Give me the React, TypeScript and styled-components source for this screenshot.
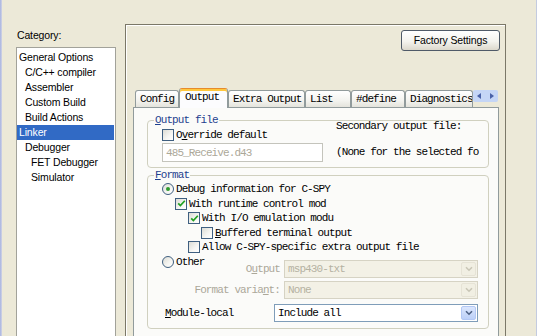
import React from "react";
import styled, { createGlobalStyle, css } from "styled-components";

const SANS = `"Liberation Sans", Arial, sans-serif`;
const MONO = `"Liberation Mono", "Courier New", monospace`;
const MONO_FONT = `11px ${MONO}`;
const MONO_SPACING = "-0.9px";

const GlobalStyle = createGlobalStyle`
  html, body { margin: 0; padding: 0; background: #ffffff; }
  body { font-family: ${SANS}; }
  * { box-sizing: border-box; }
`;

const Window = styled.div`
  display: flex;
  align-items: flex-start;
  width: 559px;
  height: 336px;
  overflow: hidden;
  background: #ece9d8;
`;

const LeftEdge = styled.div`
  align-self: stretch;
  width: 2px;
  flex-shrink: 0;
  background: linear-gradient(90deg, #a7b3e2, #d2d5e4);
`;

const Sidebar = styled.div`
  width: 123px;
  flex-shrink: 0;
  display: flex;
  flex-direction: column;
  padding: 29px 0 0 14px;
`;

const CategoryLabel = styled.div`
  font: 10.5px/12px ${SANS};
  letter-spacing: -0.15px;
  color: #000;
  padding-left: 1px;
  margin-bottom: 6px;
`;

const TreeList = styled.div`
  width: 100px;
  height: 300px;
  background: #fff;
  border: 1px solid #a2a29a;
  padding-top: 2px;
`;

const TreeItem = styled.div<{ $level: number; $selected?: boolean }>`
  height: 15px;
  line-height: 15px;
  margin-right: 1px;
  padding-left: ${(p) => 2 + p.$level * 6}px;
  font-size: 10.5px;
  letter-spacing: -0.15px;
  font-family: ${SANS};
  white-space: nowrap;
  color: ${(p) => (p.$selected ? "#fff" : "#000")};
  background: ${(p) => (p.$selected ? "#316ac5" : "transparent")};
`;

const OptionsPanel = styled.div`
  width: 381px;
  height: 330px;
  flex-shrink: 0;
  margin-top: 24px;
  border: 1px solid #7b7868;
  border-bottom: none;
  box-shadow: inset 1px 1px 0 #ffffff;
  display: flex;
  flex-direction: column;
  padding: 5px 5px 0 7px;
`;

const TopBar = styled.div`
  display: flex;
  justify-content: flex-end;
`;

const FactoryButton = styled.div`
  width: 99px;
  height: 21px;
  border: 1px solid #4f5a68;
  border-radius: 3px;
  background: linear-gradient(180deg, #ffffff 0%, #f4f3ee 55%, #dcd8cc 100%);
  font: 10.5px/19px ${SANS};
  letter-spacing: -0.15px;
  text-align: center;
  color: #000;
`;

const TabArea = styled.div`
  flex: 1;
  display: flex;
  flex-direction: column;
  margin-top: 37px;
  margin-right: 1px;
`;

const TabStrip = styled.div`
  height: 19px;
  display: flex;
  align-items: flex-end;
  padding-left: 2px;
`;

const Tab = styled.div<{ $w: number; $active?: boolean }>`
  position: relative;
  width: ${(p) => p.$w}px;
  flex-shrink: 0;
  overflow: hidden;
  white-space: nowrap;
  font: ${MONO_FONT};
  letter-spacing: ${MONO_SPACING};
  color: #000;
  border: 1px solid #919b9c;
  border-bottom: none;
  border-radius: 3px 3px 0 0;
  ${(p) =>
    p.$active
      ? css`
          height: 20px;
          margin-bottom: -1px;
          z-index: 2;
          line-height: 17px;
          padding-left: 5px;
          background: #fcfcfe;
          border-top: 1px solid #e68b2c;
          box-shadow: inset 0 2px 0 #ffc73c;
        `
      : css`
          height: 17px;
          line-height: 16px;
          padding-left: 4px;
          background: linear-gradient(180deg, #ffffff 0%, #f3f3ef 60%, #e4e3dc 100%);
        `}
`;

const ScrollArrows = styled.div`
  align-self: flex-start;
  margin-top: 2px;
  display: flex;
  width: 25px;
  height: 12px;
  background: #c5d6f6;
  border-radius: 2px;
`;

const ArrowButton = styled.div`
  flex: 1;
  display: flex;
  align-items: center;
  justify-content: center;
`;

const TabPage = styled.div`
  flex: 1;
  background: #fbfbf9;
  border: 1px solid #919b9c;
  border-bottom: none;
  padding: 12px 9px 0 13px;
  display: flex;
  flex-direction: column;
`;

const Group = styled.div<{ $gap?: number }>`
  position: relative;
  border: 1px solid #d0d0bf;
  border-radius: 4px;
  margin-top: ${(p) => p.$gap ?? 0}px;
`;

const Legend = styled.span`
  position: absolute;
  top: -7px;
  left: 6px;
  padding: 0 1px;
  background: #fbfbf9;
  font: ${MONO_FONT};
  line-height: 12px;
  letter-spacing: ${MONO_SPACING};
  color: #1f3f8f;
`;

const Key = styled.span`
  text-decoration: underline;
`;

const OutputGrid = styled.div`
  display: grid;
  grid-template-columns: 174px minmax(0, 1fr);
  padding: 0 0 5px 14px;
`;

const Column = styled.div`
  display: flex;
  flex-direction: column;
`;

const MonoText = styled.div<{ $muted?: boolean }>`
  font: ${MONO_FONT};
  line-height: 10px;
  letter-spacing: ${MONO_SPACING};
  white-space: nowrap;
  color: ${(p) => (p.$muted ? "#aca899" : "#000")};
`;

const SecondaryNote = styled(MonoText)`
  margin-top: 16px;
`;

const OptionRow = styled.div<{ $indent: number; $h?: number }>`
  height: ${(p) => p.$h ?? 14.5}px;
  display: flex;
  align-items: center;
  gap: 2px;
  padding-left: ${(p) => p.$indent * 13}px;
  font: ${MONO_FONT};
  letter-spacing: ${MONO_SPACING};
  white-space: nowrap;
  color: #000;
`;

const TopOptionRow = styled(OptionRow)`
  margin-top: 7px;
`;

const Box = styled.span`
  width: 12px;
  height: 12px;
  flex-shrink: 0;
  border: 1px solid #3f5f80;
  background: linear-gradient(135deg, #dcdcd5 0%, #f6f6f3 60%, #ffffff 100%);
  display: flex;
  align-items: center;
  justify-content: center;
`;

const Radio = styled.span`
  width: 12px;
  height: 12px;
  flex-shrink: 0;
  border: 1px solid #3f5f80;
  border-radius: 50%;
  background: linear-gradient(135deg, #dcdcd5 0%, #f6f6f3 60%, #ffffff 100%);
  display: flex;
  align-items: center;
  justify-content: center;
`;

const RadioDot = styled.span`
  width: 4px;
  height: 4px;
  border-radius: 50%;
  background: #2d9b2d;
`;

const TextBox = styled.div`
  margin-top: 1px;
  width: 161px;
  height: 19px;
  border: 1px solid #c4c4bc;
  background: #ffffff;
  padding-left: 3px;
  display: flex;
  align-items: center;
`;

const FormatBody = styled.div`
  display: flex;
  flex-direction: column;
  padding: 6px 10px 6px 14px;
`;

const OtherGrid = styled.div`
  display: grid;
  grid-template-columns: auto minmax(0, 1fr) 194px;
  column-gap: 4px;
  row-gap: 3px;
`;

const FieldLabel = styled.div<{ $muted?: boolean; $top?: number }>`
  margin-top: ${(p) => p.$top ?? 0}px;
  height: 18px;
  min-width: 0;
  display: flex;
  align-items: center;
  justify-content: flex-end;
  font: ${MONO_FONT};
  letter-spacing: ${MONO_SPACING};
  white-space: nowrap;
  color: ${(p) => (p.$muted ? "#aca899" : "#000")};
`;

const Select = styled.div<{ $disabled?: boolean; $w: number; $top?: number }>`
  width: ${(p) => p.$w}px;
  height: 18px;
  margin-top: ${(p) => p.$top ?? 0}px;
  display: flex;
  align-items: stretch;
  border: 1px solid ${(p) => (p.$disabled ? "#d6d3c4" : "#7f9db9")};
  background: ${(p) => (p.$disabled ? "#f3f1e6" : "#ffffff")};
`;

const SelectText = styled.div<{ $disabled?: boolean }>`
  flex: 1;
  padding-left: 3px;
  display: flex;
  align-items: center;
  font: ${MONO_FONT};
  letter-spacing: ${MONO_SPACING};
  white-space: nowrap;
  color: ${(p) => (p.$disabled ? "#b5b2a2" : "#000")};
`;

const DropButton = styled.div<{ $disabled?: boolean }>`
  width: 15px;
  margin: 1px;
  border-radius: 2px;
  display: flex;
  align-items: center;
  justify-content: center;
  ${(p) =>
    p.$disabled
      ? css`
          background: #f1efe3;
          border: 1px solid #e6e3d6;
        `
      : css`
          background: linear-gradient(180deg, #dbe6fd 0%, #bcd0f8 100%);
          border: 1px solid #b3c8f5;
        `}
`;

const ModuleRow = styled.div`
  margin-top: 5px;
  display: flex;
  align-items: center;
  justify-content: space-between;
  padding-left: 3px;
  font: ${MONO_FONT};
  letter-spacing: ${MONO_SPACING};
  color: #000;
`;

const Gutter = styled.div`
  width: 30px;
  flex-shrink: 0;
`;

const RightArea = styled.div`
  flex: 1;
  align-self: stretch;
  background: #ffffff;
  border-left: 1px solid #c3cbe0;
`;

const Check = () => (
  <svg width="9" height="9" viewBox="0 0 9 9">
    <path d="M1.2 4.3 L3.4 6.6 L7.8 1.8" fill="none" stroke="#21a121" strokeWidth="1.7" />
  </svg>
);

const Chevron = ({ color }: { color: string }) => (
  <svg width="8" height="6" viewBox="0 0 8 6">
    <path d="M1 1.2 L4 4.2 L7 1.2" fill="none" stroke={color} strokeWidth="1.6" />
  </svg>
);

const CheckBox = ({ checked }: { checked?: boolean }) => <Box>{checked && <Check />}</Box>;

const RadioButton = ({ checked }: { checked?: boolean }) => (
  <Radio>{checked && <RadioDot />}</Radio>
);

const Dropdown = ({ value, w, disabled, top }: { value: string; w: number; disabled?: boolean; top?: number }) => (
  <Select $w={w} $disabled={disabled} $top={top}>
    <SelectText $disabled={disabled}>{value}</SelectText>
    <DropButton $disabled={disabled}>
      <Chevron color={disabled ? "#c9c6b6" : "#4d6185"} />
    </DropButton>
  </Select>
);

const categories = [
  { label: "General Options", level: 0 },
  { label: "C/C++ compiler", level: 1 },
  { label: "Assembler", level: 1 },
  { label: "Custom Build", level: 1 },
  { label: "Build Actions", level: 1 },
  { label: "Linker", level: 0, selected: true },
  { label: "Debugger", level: 1 },
  { label: "FET Debugger", level: 2 },
  { label: "Simulator", level: 2 },
];

const tabs = [
  { label: "Config", w: 44 },
  { label: "Output", w: 49, active: true },
  { label: "Extra Output", w: 77 },
  { label: "List", w: 46 },
  { label: "#define", w: 54 },
  { label: "Diagnostics", w: 68 },
];

export default function App() {
  return (
    <>
      <GlobalStyle />
      <Window>
        <LeftEdge />
        <Sidebar>
          <CategoryLabel>Category:</CategoryLabel>
          <TreeList>
            {categories.map((c) => (
              <TreeItem key={c.label} $level={c.level} $selected={c.selected}>
                {c.label}
              </TreeItem>
            ))}
          </TreeList>
        </Sidebar>
        <OptionsPanel>
          <TopBar>
            <FactoryButton>Factory Settings</FactoryButton>
          </TopBar>
          <TabArea>
            <TabStrip>
              {tabs.map((t) => (
                <Tab key={t.label} $w={t.w} $active={t.active}>
                  {t.label}
                </Tab>
              ))}
              <ScrollArrows>
                <ArrowButton>
                  <svg width="4" height="6" viewBox="0 0 4 6">
                    <path d="M4 0 L0 3 L4 6 Z" fill="#4a62a8" />
                  </svg>
                </ArrowButton>
                <ArrowButton>
                  <svg width="4" height="6" viewBox="0 0 4 6">
                    <path d="M0 0 L4 3 L0 6 Z" fill="#4a62a8" />
                  </svg>
                </ArrowButton>
              </ScrollArrows>
            </TabStrip>
            <TabPage>
              <Group>
                <Legend>
                  <Key>O</Key>utput file
                </Legend>
                <OutputGrid>
                  <Column>
                    <TopOptionRow $indent={0} $h={14}>
                      <CheckBox />
                      <span>
                        O<Key>v</Key>erride default
                      </span>
                    </TopOptionRow>
                    <TextBox>
                      <MonoText $muted>485_Receive.d43</MonoText>
                    </TextBox>
                  </Column>
                  <Column>
                    <MonoText>Secondary output file:</MonoText>
                    <SecondaryNote>(None for the selected fo</SecondaryNote>
                  </Column>
                </OutputGrid>
              </Group>
              <Group $gap={7}>
                <Legend>
                  <Key>F</Key>ormat
                </Legend>
                <FormatBody>
                  <OptionRow $indent={0}>
                    <RadioButton checked />
                    <span>Debug information for C-SPY</span>
                  </OptionRow>
                  <OptionRow $indent={1}>
                    <CheckBox checked />
                    <span>With runtime control mod</span>
                  </OptionRow>
                  <OptionRow $indent={2}>
                    <CheckBox checked />
                    <span>With I/O emulation modu</span>
                  </OptionRow>
                  <OptionRow $indent={3}>
                    <CheckBox />
                    <span>
                      <Key>B</Key>uffered terminal output
                    </span>
                  </OptionRow>
                  <OptionRow $indent={2}>
                    <CheckBox />
                    <span>Allow C-SPY-specific extra output file</span>
                  </OptionRow>
                  <OtherGrid>
                    <OptionRow $indent={0}>
                      <RadioButton />
                      <span>Other</span>
                    </OptionRow>
                    <FieldLabel $muted $top={5}>
                      <span>
                        O<Key>u</Key>tput
                      </span>
                    </FieldLabel>
                    <Dropdown value="msp430-txt" w={194} disabled top={5} />
                    <span />
                    <FieldLabel $muted>
                      <span>
                        Format varia<Key>n</Key>t:
                      </span>
                    </FieldLabel>
                    <Dropdown value="None" w={194} disabled />
                  </OtherGrid>
                  <ModuleRow>
                    <span>
                      <Key>M</Key>odule-local
                    </span>
                    <Dropdown value="Include all" w={204} />
                  </ModuleRow>
                </FormatBody>
              </Group>
            </TabPage>
          </TabArea>
        </OptionsPanel>
        <Gutter />
        <RightArea />
      </Window>
    </>
  );
}
